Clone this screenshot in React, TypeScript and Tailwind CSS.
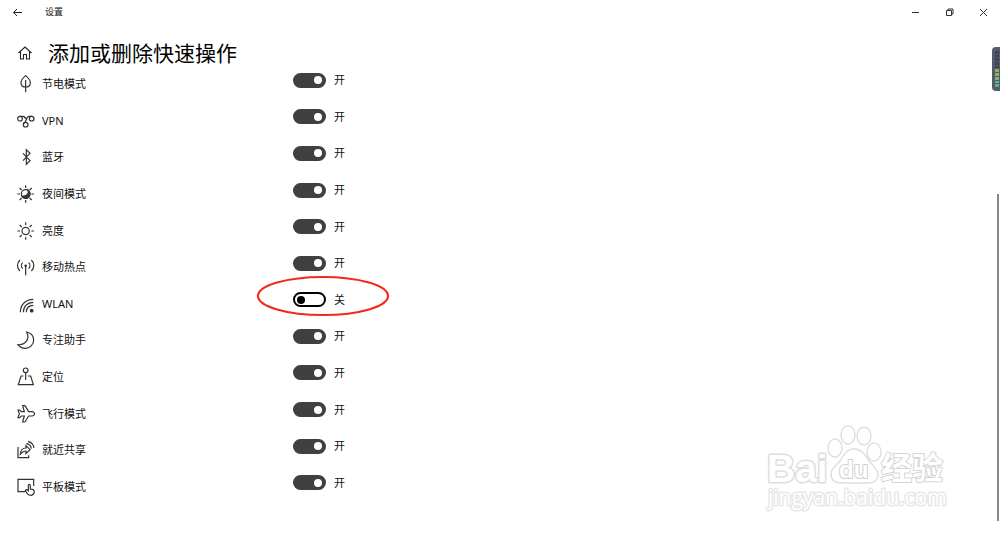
import { useState } from "react";
import type { ReactNode } from "react";

type QuickAction = {
    id: string;
    name: string;
    icon: ReactNode;
    highlighted?: boolean;
};

const sunRays = "M26 1v8M26 45v8M1 27h8M43 27h8M8 9l6 6M44 9l-6 6M8 45l6-6M44 45l-6-6";

const quickActions: QuickAction[] = [
    {
        id: "battery",
        name: "节电模式",
        icon: <path d="M26 2C19 8 12 14 12 23c0 8 6 13 14 13s14-5 14-13C40 14 33 8 26 2zM26 15v37" />,
    },
    {
        id: "vpn",
        name: "VPN",
        icon: (
            <>
                <circle cx="9" cy="20" r="7" />
                <circle cx="44" cy="20" r="7" />
                <circle cx="26" cy="38" r="7" />
                <path d="M9 13h10c5 0 4 7 11 7M44 13h-9c-7 0-6 18-16 21M19 13l9 8" />
            </>
        ),
    },
    {
        id: "bluetooth",
        name: "蓝牙",
        icon: <path d="M18 16l21 22-11 11V5l11 11-21 22" />,
    },
    {
        id: "night",
        name: "夜间模式",
        icon: (
            <>
                <circle cx="26" cy="27" r="13" />
                <path d={sunRays} />
                <path d="M33 15c4 12-6 20-18 18 4 8 15 9 20 3 6-6 5-16-2-21z" fill="#333" />
            </>
        ),
    },
    {
        id: "brightness",
        name: "亮度",
        icon: (
            <>
                <circle cx="26" cy="27" r="11" />
                <path d={sunRays} />
            </>
        ),
    },
    {
        id: "hotspot",
        name: "移动热点",
        icon: (
            <>
                <circle cx="26" cy="23" r="2" fill="#333" />
                <path d="M26 23v29M17 14c-5 5-5 13 0 18M35 14c5 5 5 13 0 18M9 6C-1 15-1 30 9 39M43 6c10 9 10 24 0 33" />
            </>
        ),
    },
    {
        id: "wlan",
        name: "WLAN",
        highlighted: true,
        icon: (
            <>
                <circle cx="44" cy="47" r="4" fill="#333" />
                <path d="M10 52C10 29 26 13 49 13M19 52c0-18 12-30 30-30M28 52c0-13 8-21 21-21" />
            </>
        ),
    },
    {
        id: "focus",
        name: "专注助手",
        icon: <path d="M29 3c12 3 21 12 21 24 0 14-11 25-25 25C16 52 8 48 3 41c20 2 37-15 26-38z" />,
    },
    {
        id: "location",
        name: "定位",
        icon: (
            <>
                <circle cx="26" cy="7" r="7" />
                <path d="M26 14v22M19 24H12L4 50h45l-8-26h-8" />
            </>
        ),
    },
    {
        id: "airplane",
        name: "飞行模式",
        icon: (
            <path d="M17 2h7l11 18h11c9 2 9 11 0 13H35L24 51h-7l5-18h-9l-5 5H3l4-12-4-11h5l5 5h9z" />
        ),
    },
    {
        id: "share",
        name: "就近共享",
        icon: (
            <>
                <path d="M3 18v32h32v-7" />
                <path d="M10 39c1-12 7-18 17-18v-7l12 12-12 12v-8c-8 0-12 3-17 9z" />
                <path d="M28 8c8 1 14 8 15 15M33 1c10 3 17 11 18 20" />
            </>
        ),
    },
    {
        id: "tablet",
        name: "平板模式",
        icon: (
            <>
                <path d="M24 41H3V4h47v20" />
                <path d="M34 38V23c0-5 6-5 6 0v10l8 2c3 1 4 3 4 6-1 8-5 11-12 11-6 0-9-4-11-8l-4-6c1-5 6-3 9 0z" />
            </>
        ),
    },
];

const meterBars = ["bg-[#39455a]", "bg-[#39455a]", "bg-[#39455a]", "bg-[#39455a]", "bg-[#39455a]", "bg-[#9dac54]", "bg-[#93b65b]", "bg-[#78b96c]", "bg-[#5db985]", "bg-[#4bb39a]"];

const Icon = ({ children }: { children: ReactNode }) => (
    <svg viewBox="0 0 54 54" className="w-[18px] h-[18px] shrink-0 overflow-visible" fill="none" stroke="#333" strokeWidth="3.6" aria-hidden="true">
        {children}
    </svg>
);

const TitleBar = () => (
    <header className="h-6 flex items-center justify-between pl-3">
        <div className="flex items-center gap-x-[22px]">
            <button aria-label="返回">
                <svg viewBox="0 0 11 11" className="w-[11px] h-[11px]" fill="none" stroke="#222" aria-hidden="true">
                    <path d="M10 5.5H1.5M5 2L1.5 5.5 5 9" />
                </svg>
            </button>
            <span className="text-[9px] leading-3">设置</span>
        </div>
        <div className="flex items-center gap-x-[25px] pr-3">
            <button aria-label="最小化">
                <svg viewBox="0 0 9 9" className="w-[9px] h-[9px]" fill="none" stroke="#333" aria-hidden="true">
                    <path d="M1 4.5h7" />
                </svg>
            </button>
            <button aria-label="还原">
                <svg viewBox="0 0 9 9" className="w-[9px] h-[9px]" fill="none" stroke="#333" aria-hidden="true">
                    <path d="M1.5 2.5h5v5h-5zM3 2.5V1h5v5H6.5" />
                </svg>
            </button>
            <button aria-label="关闭">
                <svg viewBox="0 0 9 9" className="w-[9px] h-[9px]" fill="none" stroke="#333" aria-hidden="true">
                    <path d="M1 1l7 7M8 1L1 8" />
                </svg>
            </button>
        </div>
    </header>
);

const Watermark = () => (
    <svg viewBox="0 0 190 92" className="absolute right-[46px] bottom-[19px] w-[190px] h-[92px] pointer-events-none" fill="#fff" stroke="#dedede" strokeWidth="1.4" strokeLinejoin="round">
        <text x="3" y="60" fontSize="39" fontWeight="bold" strokeWidth="3" paintOrder="stroke" fontFamily="'Liberation Sans', sans-serif">Bai</text>
        <ellipse cx="71" cy="26" rx="7" ry="9" />
        <ellipse cx="84" cy="13" rx="7" ry="9" />
        <ellipse cx="100" cy="14" rx="7" ry="9" />
        <ellipse cx="110" cy="30" rx="7" ry="9" />
        <path d="M90 27c8 0 11 6 15 12 4 5 9 8 9 14 0 5-4 8-10 8H77c-7 0-10-4-10-9 0-6 6-9 9-13 4-6 6-12 14-12z" />
        <text x="75" y="56" fontSize="24" fontWeight="bold" stroke="#cfcfcf" strokeWidth="2" paintOrder="stroke" fontFamily="'Liberation Sans', sans-serif">du</text>
        <text x="117" y="57" fontSize="31" fontWeight="bold" stroke="#d4d4d4" strokeWidth="2" paintOrder="stroke" fontFamily="'Noto Sans CJK SC', sans-serif">经验</text>
        <text x="4" y="83" fontSize="21" stroke="#e8e8e8" strokeWidth="3" paintOrder="stroke" fontFamily="'Open Sans', sans-serif">jingyan.baidu.com</text>
    </svg>
);

const App = () => {

    const [enabled, setEnabled] = useState<Record<string, boolean>>(
        Object.fromEntries(quickActions.map((action) => [action.id, action.id !== "wlan"]))
    );

    const handleToggle = (id: string) => {
        setEnabled((prev) => ({ ...prev, [id]: !prev[id] }));
    };

    return (
        <div className="relative w-full min-h-screen bg-white text-[#111] font-['Noto_Sans','Noto_Sans_CJK_SC',sans-serif] overflow-hidden">
            <TitleBar />

            <main>
                <div className="mt-[19px] mb-px pl-[18px] flex items-center gap-x-4">
                    <a href="#home" aria-label="主页">
                        <svg viewBox="0 0 14 14" className="w-[14px] h-[14px]" fill="none" stroke="#222" strokeWidth="1.1" aria-hidden="true">
                            <path d="M.5 7L7 1l6.500 6M2.500 5.500v7.500h3V8.500h3V13h3V5.500" />
                        </svg>
                    </a>
                    <h1 className="text-[21px] leading-5 text-black">添加或删除快速操作</h1>
                </div>

                <ul className="h-[439px] grid auto-rows-fr pl-[17px]">
                    {quickActions.map((action) => (
                        <li key={action.id} className="relative flex items-center text-[11px] leading-4">
                            <label htmlFor={action.id} className="w-[276px] flex items-center gap-x-[7px] pt-1">
                                <Icon>{action.icon}</Icon>
                                {action.name}
                            </label>
                            <div className="flex items-center gap-x-2 pb-1">
                                <input
                                    id={action.id}
                                    type="checkbox"
                                    role="switch"
                                    checked={enabled[action.id]}
                                    onChange={() => handleToggle(action.id)}
                                    className="w-[33px] h-[15px] flex items-center appearance-none border-2 border-black rounded-full px-0.5 before:w-2 before:h-2 before:rounded-full before:bg-black checked:justify-end checked:border-[#404040] checked:bg-[#404040] before:shrink-0 checked:before:bg-white"
                                />
                                <span>{enabled[action.id] ? "开" : "关"}</span>
                            </div>
                            {action.highlighted && (
                                <svg viewBox="0 0 134 42" className="absolute left-[239px] -top-2 w-[134px] h-[42px] pointer-events-none" fill="none" stroke="#f5281b" strokeWidth="2.2" aria-hidden="true">
                                    <ellipse cx="67" cy="21" rx="65" ry="19" />
                                </svg>
                            )}
                        </li>
                    ))}
                </ul>
            </main>

            <div className="absolute right-0 top-[47px] w-2 h-11 flex flex-col justify-end gap-y-px rounded-l-sm bg-[#555b6c] pl-[3px] pr-px py-1">
                {meterBars.map((bar, index) => (
                    <div key={index} className={`flex-1 ${bar}`} />
                ))}
            </div>
            <div className="absolute right-px top-[194px] bottom-3 w-0.5 bg-[#888]" />

            <Watermark />
        </div>
    );
}

export default App;
